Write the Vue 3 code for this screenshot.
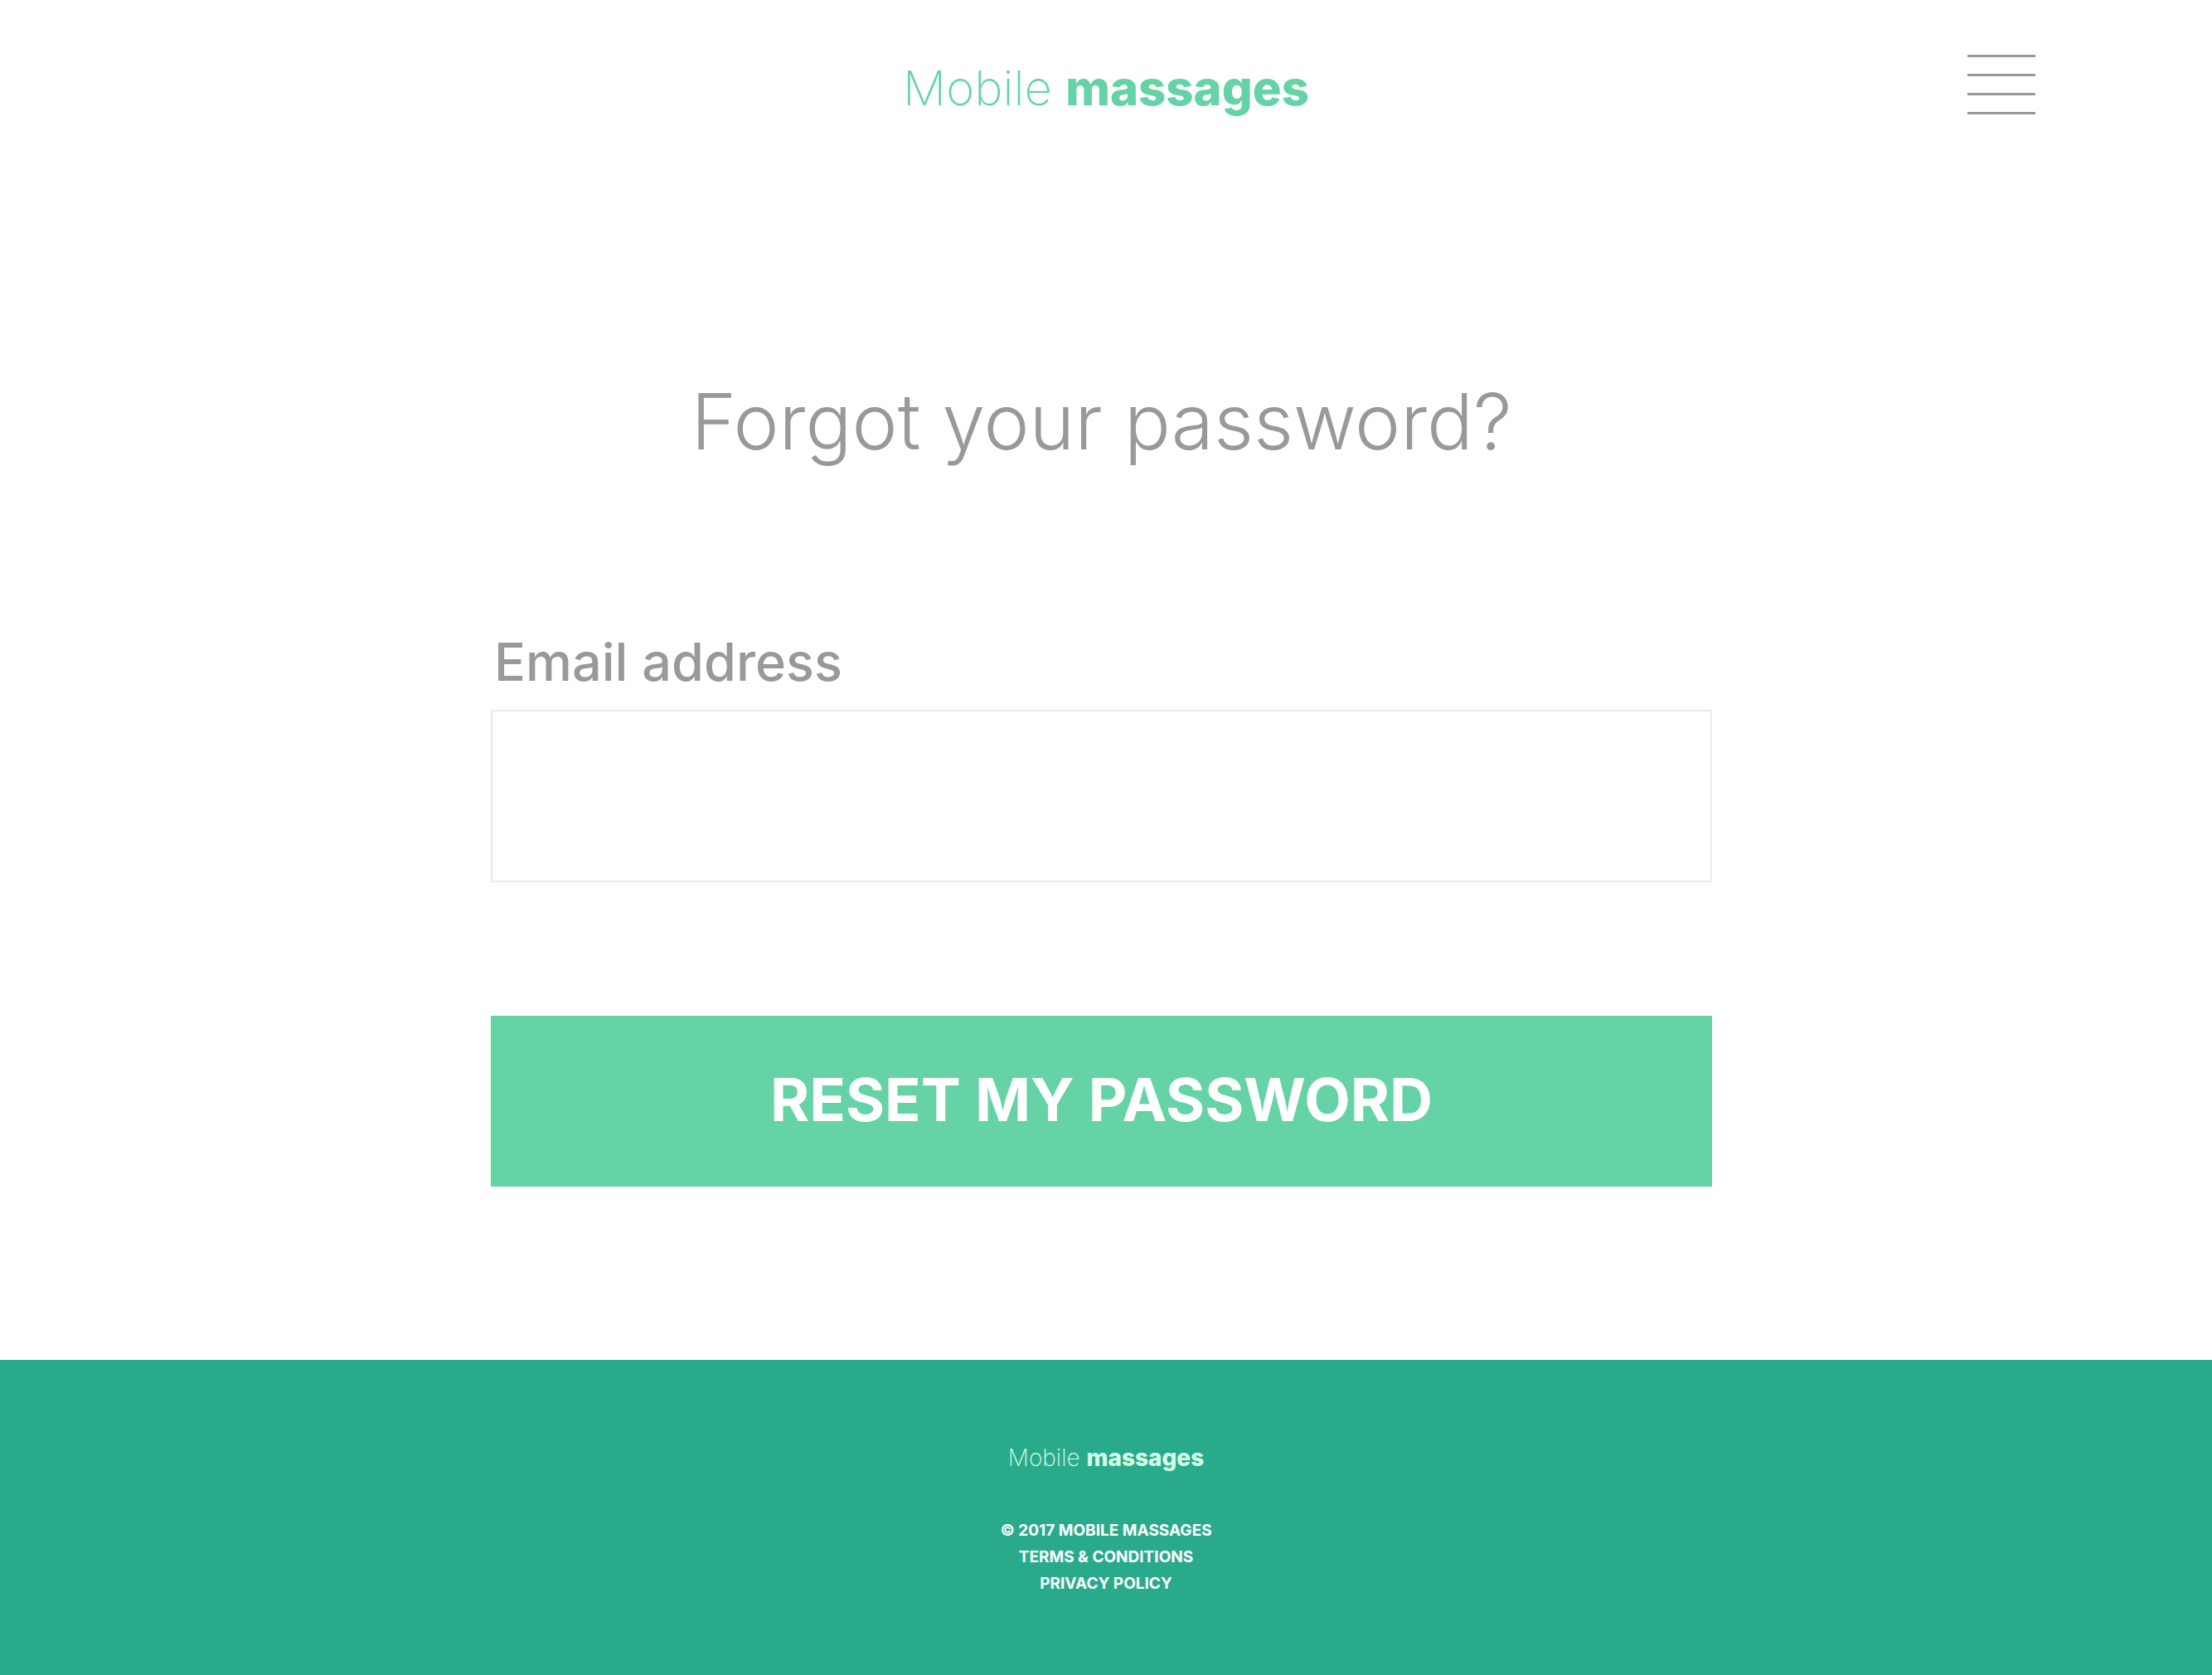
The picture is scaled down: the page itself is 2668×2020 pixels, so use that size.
<script setup>
import { ref } from 'vue'

const email = ref('')
const links = [
  { text: 'Terms & Conditions', href: '#terms' },
  { text: 'Privacy Policy', href: '#privacy' }
]
</script>

<template>
  <div class="page">
    <header class="header">
      <a class="logo" href="#home"><span class="thin">Mobile</span> <b>massages</b></a>
      <button class="menu" type="button" aria-label="Menu">
        <svg viewBox="0 0 82 72" width="82" height="72" fill="#999">
          <rect width="82" height="3" />
          <rect y="23" width="82" height="3" />
          <rect y="46" width="82" height="3" />
          <rect y="69" width="82" height="3" />
        </svg>
      </button>
    </header>

    <main class="main">
      <form class="form" @submit.prevent>
        <h1 class="title">Forgot your password?</h1>
        <label class="label" for="email">Email address</label>
        <input id="email" v-model="email" class="input" type="email" />
        <button class="submit" type="submit">RESET MY PASSWORD</button>
      </form>
    </main>

    <footer class="footer">
      <a class="logo logo-small" href="#home"><span class="thin">Mobile</span> <b>massages</b></a>
      <p class="legal">© 2017 Mobile Massages</p>
      <a v-for="link in links" :key="link.href" class="legal" :href="link.href">{{ link.text }}</a>
    </footer>
  </div>
</template>

<style>
body {
  margin: 0;
}
</style>

<style scoped>
.page {
  display: flex;
  flex-direction: column;
  min-height: 100vh;
  background: #fff;
  color: #999;
  font-family: Inter, "Liberation Sans", sans-serif;
}

.header {
  display: grid;
  grid-template-columns: 1fr auto 1fr;
  align-items: start;
  padding: 66px 8% 0;
}

.logo {
  grid-column: 2;
  color: #65d3a5;
  font-size: 58px;
  line-height: 80px;
  text-decoration: none;
  white-space: nowrap;
}

.logo b {
  font-weight: 800;
}

.thin {
  font-weight: 200;
}

.menu {
  justify-self: end;
  padding: 0;
  border: 0;
  background: none;
  cursor: pointer;
}

.menu svg {
  display: block;
}

.main {
  display: grid;
  grid-template-columns: 592fr 1473fr 603fr;
  padding: 300px 0 209px;
}

.form {
  grid-column: 2;
  display: flex;
  flex-direction: column;
}

.title {
  margin: 0 0 188px;
  font-size: 93px;
  font-weight: 300;
  line-height: 124px;
  text-align: center;
  white-space: nowrap;
}

.label {
  padding: 0 4px;
  font-size: 63px;
  font-weight: 500;
  line-height: 80px;
}

.input {
  box-sizing: border-box;
  height: 208px;
  margin: 18px 0 161px;
  padding: 0 40px;
  border: 2px solid #ebebeb;
  background: #fff;
  color: inherit;
  font: inherit;
  font-size: 63px;
}

.submit {
  height: 206px;
  padding: 0 0 6px;
  border: 0;
  background: #65d3a5;
  color: #fff;
  font: inherit;
  font-size: 72px;
  font-weight: 700;
}

.footer {
  flex: 1;
  display: flex;
  flex-direction: column;
  align-items: center;
  padding: 98px 0 92px;
  background: #29ab8b;
}

.logo-small {
  margin-bottom: 52px;
  color: #d6ffe8;
  font-size: 28px;
  line-height: 40px;
}

.legal {
  margin: 0;
  color: #fff;
  font-size: 19px;
  font-weight: 700;
  line-height: 32px;
  text-decoration: none;
  text-transform: uppercase;
}
</style>
